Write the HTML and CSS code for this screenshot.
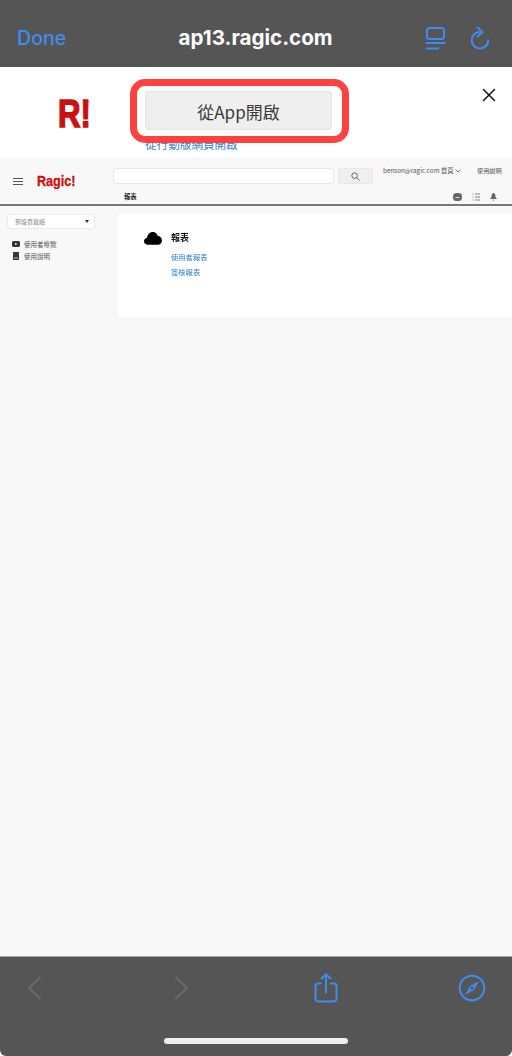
FILE: index.html
```html
<!DOCTYPE html>
<html lang="zh-Hant">
<head>
    <meta charset="UTF-8">
    <meta name="viewport" content="width=device-width, initial-scale=1.0">
    <title>ap13.ragic.com</title>
    <link rel="stylesheet" href="styles.css">
</head>
<body>
    <div class="phone">
        <div class="topbar">
            <span class="done">Done</span>
            <span class="site">ap13.ragic.com</span>
            <div class="top-icons">
                <svg class="ic-reader" width="22" height="24" viewBox="0 0 22 24" fill="none" stroke="#3f8cf0" stroke-width="2" stroke-linecap="round">
                    <rect x="2" y="2" width="17" height="11" rx="2.5"/>
                    <path d="M1.5 17H20M1.5 22.500H13"/>
                </svg>
                <svg class="ic-reload" width="20" height="24" viewBox="0 0 20 24" fill="none" stroke="#3f8cf0" stroke-width="2" stroke-linecap="round" stroke-linejoin="round">
                    <path d="M9 6a8.300 8.300 0 1 0 9.300 8.300"/>
                    <path d="M7.500 1.500L12.500 6L7.500 10.500"/>
                </svg>
            </div>
        </div>

        <div class="banner">
            <div class="logo-r">R!</div>
            <div class="banner-mid">
                <button class="open-app">從App開啟</button>
                <a class="open-web">從行動版網頁開啟</a>
            </div>
            <svg class="close" width="14" height="14" viewBox="0 0 14 14" stroke="#111" stroke-width="1.500" stroke-linecap="round">
                <path d="M1.500 1.500L12.500 12.500M12.500 1.500L1.500 12.500"/>
            </svg>
        </div>

        <div class="web">
            <div class="web-header">
                <div class="web-row1">
                    <div class="burger"><i></i><i></i><i></i></div>
                    <div class="ragic-logo">Ragic!</div>
                    <div class="search-input"></div>
                    <div class="search-btn">
                        <svg width="9" height="9" viewBox="0 0 9 9" fill="none" stroke="#666" stroke-width="1">
                            <circle cx="3.600" cy="3.600" r="2.800"/>
                            <path d="M5.700 5.700L8.500 8.500"/>
                        </svg>
                    </div>
                    <div class="user">benson@ragic.com 首頁
                        <svg width="6" height="4" viewBox="0 0 6 4" fill="none" stroke="#555" stroke-width="0.800"><path d="M0.500 0.500L3 3L5.500 0.500"/></svg>
                    </div>
                    <div class="help">使用說明</div>
                </div>
                <div class="web-row2">
                    <span class="tab">報表</span>
                    <div class="tab-icons">
                        <svg width="9" height="8" viewBox="0 0 9 8" fill="#666"><rect x="0" y="0" width="9" height="8" rx="3.500"/><path d="M2.500 4.500H6.500" stroke="#ddd" stroke-width="1"/></svg>
                        <svg width="8" height="8" viewBox="0 0 8 8" fill="none" stroke="#666" stroke-width="0.800"><path d="M3 1H8M3 4H8M3 7H8M0.500 1H1.500M0.500 4H1.500M0.500 7H1.500"/></svg>
                        <svg width="7" height="8" viewBox="0 0 7 8" fill="#666"><path d="M3.500 0C5.300 0.500 5.500 2 5.500 4L7 6H0L1.500 4C1.500 2 1.700 0.500 3.500 0ZM2.500 6.700H4.500L3.500 8Z"/></svg>
                    </div>
                </div>
            </div>

            <div class="web-main">
                <div class="sidebar">
                    <div class="select">
                        <span>預設頁籤組</span>
                        <i class="caret"></i>
                    </div>
                    <div class="side-item">
                        <svg width="8" height="6" viewBox="0 0 8 6"><rect width="8" height="6" rx="1.500" fill="#333"/><path d="M3.200 1.700L5.200 3L3.200 4.300Z" fill="#fff"/></svg>
                        使用者導覽
                    </div>
                    <div class="side-item">
                        <svg width="8" height="8" viewBox="0 0 8 8"><rect x="1" width="6" height="8" rx="1" fill="#333"/><path d="M2 6H6" stroke="#fff" stroke-width="0.700"/></svg>
                        使用說明
                    </div>
                </div>
                <div class="card">
                    <svg class="cloud" width="18" height="13" viewBox="0 0 18 13" fill="#000">
                        <path d="M4 12.800C1.800 12.800 0 11.300 0 9.300C0 7.500 1.300 6.100 3 5.800C3.500 2.500 5.700 0 8.800 0C11.300 0 13 1.600 13.700 3.700C16 4 18 6 18 8.500C18 11 16.200 12.800 14 12.800Z"/>
                    </svg>
                    <div class="card-body">
                        <div class="card-title">報表</div>
                        <a class="card-link">使用者報表</a>
                        <a class="card-link">簽核報表</a>
                    </div>
                </div>
            </div>
        </div>

        <div class="bottombar">
            <div class="bottom-icons">
                <svg width="14" height="24" viewBox="0 0 14 24" fill="none" stroke="#6c6c6c" stroke-width="2" stroke-linecap="round" stroke-linejoin="round"><path d="M13 1.500L2 12L13 22.500"/></svg>
                <svg class="forward" width="14" height="24" viewBox="0 0 14 24" fill="none" stroke="#6c6c6c" stroke-width="2" stroke-linecap="round" stroke-linejoin="round"><path d="M1 1.500L12 12L1 22.500"/></svg>
                <svg width="24" height="30" viewBox="0 0 24 30" fill="none" stroke="#3f8cf0" stroke-width="2" stroke-linecap="round" stroke-linejoin="round"><path d="M7 10.500H4A2.500 2.500 0 0 0 1.500 13V26A2.500 2.500 0 0 0 4 28.500H20A2.500 2.500 0 0 0 22.500 26V13A2.500 2.500 0 0 0 20 10.500H17M12 19.500V1.500M7.500 5.500L12 1.200L16.500 5.500"/></svg>
                <svg width="28" height="28" viewBox="0 0 28 28"><circle cx="14" cy="14" r="12.300" fill="none" stroke="#3f8cf0" stroke-width="2"/><path d="M21 7L16 16L7 21L12 12Z" fill="#3f8cf0"/><circle cx="14" cy="14" r="1.600" fill="#555"/></svg>
            </div>
            <div class="home-indicator"></div>
        </div>

        <div class="highlight"></div>
    </div>
</body>
</html>
```

FILE: styles.css
```css
html, body {
    margin: 0;
    padding: 0;
    background-color: #fff;
}

.phone {
    position: relative;
    display: flex;
    flex-direction: column;
    width: 512px;
    height: 1056px;
    overflow: hidden;
    font-family: "Noto Sans CJK TC", "Liberation Sans", sans-serif;
    filter: blur(0.3px);
}

/* safari view header */
.topbar {
    display: flex;
    align-items: center;
    justify-content: space-between;
    height: 67px;
    padding: 8px 22px 0 17px;
    box-sizing: border-box;
    background-color: #555;
}

.done {
    font-family: Inter, sans-serif;
    font-size: 19.600px;
    font-weight: 500;
    color: #3f8cf0;
}

.site {
    font-family: Inter, sans-serif;
    font-size: 20.600px;
    font-weight: 700;
    color: #fff;
    margin-left: 20px;
}

.top-icons {
    display: flex;
    align-items: center;
    gap: 23px;
}

/* app banner */
.banner {
    display: flex;
    height: 91px;
    background-color: #fff;
    overflow: hidden;
}

.logo-r {
    width: 58px;
    margin: 29px 29px 0 58px;
    font-family: "Liberation Sans", sans-serif;
    font-size: 39px;
    font-weight: 700;
    line-height: 36px;
    color: #cc0f0f;
    transform: scaleX(0.8);
    transform-origin: left center;
    -webkit-text-stroke: 1.500px #cc0f0f;
}

.banner-mid {
    display: flex;
    flex-direction: column;
    width: 187px;
    padding-top: 24px;
}

.open-app {
    height: 39px;
    padding: 1px 0 0;
    background-color: #efefef;
    border: 1px solid #e4e4e4;
    border-radius: 3px;
    font-family: "Noto Sans CJK TC", sans-serif;
    font-size: 17px;
    font-weight: 400;
    color: #3a3a3a;
}

.open-web {
    margin-top: 6px;
    font-size: 11.600px;
    line-height: 16px;
    color: #2a84d0;
}

.close {
    margin: 21px 0 0 150px;
}

/* the scaled down web page */
.web {
    flex: 1;
    display: flex;
    flex-direction: column;
    background-color: #f8f8f8;
    color: #333;
}

.web-header {
    height: 48px;
    box-sizing: border-box;
    border-bottom: 2px solid #777;
}

.web-row1 {
    display: flex;
    align-items: flex-start;
    height: 32px;
    padding-top: 10px;
    box-sizing: border-box;
}

.burger {
    display: flex;
    flex-direction: column;
    gap: 2px;
    width: 10px;
    margin: 10px 14px 0 13px;
}

.burger i {
    height: 1px;
    background-color: #555;
}

.ragic-logo {
    width: 38px;
    margin: 5px 38px 0 0;
    font-family: "Liberation Sans", sans-serif;
    font-size: 14px;
    font-weight: 700;
    line-height: 16px;
    color: #cc0f0f;
    white-space: nowrap;
    transform: scaleX(0.9);
    transform-origin: left center;
    -webkit-text-stroke: 0.3px #cc0f0f;
}

.search-input {
    width: 219px;
    height: 14px;
    background-color: #fff;
    border: 1px solid #e6e6e6;
    border-radius: 3px;
}

.search-btn {
    display: flex;
    align-items: center;
    justify-content: center;
    width: 33px;
    height: 14px;
    margin-left: 4px;
    background-color: #efefef;
    border: 1px solid #e6e6e6;
    border-radius: 2px;
}

.user {
    width: 78px;
    margin: -1px 16px 0 10px;
    font-size: 6.300px;
    line-height: 8px;
    color: #555;
    white-space: nowrap;
}

.help {
    font-size: 6.200px;
    line-height: 8px;
    color: #555;
    margin-top: -1px;
    white-space: nowrap;
}

.web-row2 {
    display: flex;
    align-items: center;
    justify-content: space-between;
    height: 13px;
    padding: 0 15px 0 124px;
}

.tab {
    font-size: 6.300px;
    font-weight: 700;
    line-height: 10px;
    color: #222;
}

.tab-icons {
    display: flex;
    align-items: center;
    gap: 10px;
}

.web-main {
    flex: 1;
    display: flex;
    align-items: flex-start;
    padding-top: 8px;
}

.sidebar {
    width: 118px;
    padding-left: 8px;
    box-sizing: border-box;
}

.select {
    display: flex;
    align-items: center;
    justify-content: space-between;
    width: 86px;
    height: 13px;
    margin: 1px 0 10px;
    padding: 0 5px 0 7px;
    box-sizing: border-box;
    background-color: #fff;
    border-radius: 2px;
    box-shadow: 0 0 2px rgba(0, 0, 0, 0.2);
    font-size: 6px;
    color: #888;
}

.caret {
    border-left: 2.500px solid transparent;
    border-right: 2.500px solid transparent;
    border-top: 3px solid #333;
}

.side-item {
    display: flex;
    align-items: center;
    gap: 4px;
    height: 12px;
    padding-left: 4px;
    font-size: 6.500px;
    color: #555;
}

.card {
    flex: 1;
    display: flex;
    align-items: flex-start;
    height: 103px;
    padding: 18px 0 0 26px;
    box-sizing: border-box;
    background-color: #fff;
    border-radius: 3px 0 0 3px;
}

.cloud {
    margin-right: 9px;
}

.card-body {
    display: flex;
    flex-direction: column;
}

.card-title {
    margin-bottom: 8px;
    font-size: 9px;
    font-weight: 700;
    line-height: 12px;
    color: #111;
}

.card-link {
    height: 15px;
    font-size: 7.300px;
    line-height: 11px;
    color: #2a84d0;
}

/* safari view toolbar */
.bottombar {
    display: flex;
    flex-direction: column;
    height: 100px;
    padding-top: 2px;
    box-sizing: border-box;
    background-color: #555;
    border-top: 1px solid #a8a8a8;
    border-radius: 0 0 6px 6px;
}

.bottom-icons {
    display: grid;
    grid-template-columns: repeat(4, 146px);
    justify-items: center;
    align-items: center;
    height: 58px;
    margin-left: -39px;
}

.forward {
    margin-left: 3px;
}

.home-indicator {
    width: 184px;
    height: 6px;
    margin: 21px 0 0 164px;
    background-color: #eee;
    border-radius: 3px;
}

/* red marker drawn over the screenshot */
.highlight {
    position: absolute;
    left: 130px;
    top: 79px;
    width: 219px;
    height: 64px;
    box-sizing: border-box;
    border: 7px solid #fd4040;
    border-radius: 15px;
}
```
